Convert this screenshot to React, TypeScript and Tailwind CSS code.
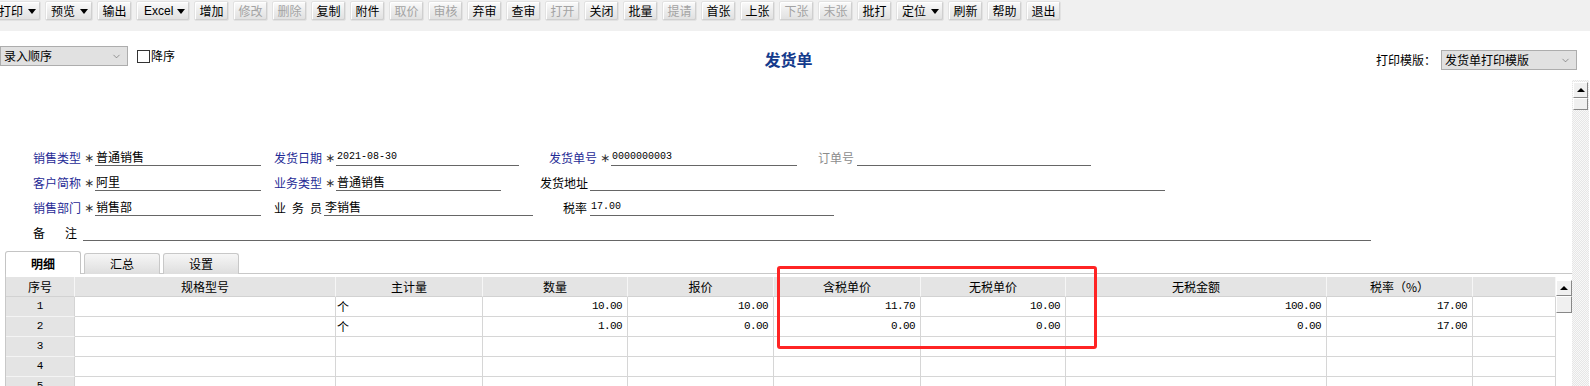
import { ChevronDown } from "lucide-react";

const CJK = "font-['Noto_Sans_CJK_SC','Noto_Sans',sans-serif]";
const MONO = "font-['Liberation_Mono','DejaVu_Sans_Mono',monospace]";

type Btn = { t: string; drop?: boolean; off?: boolean; w: string };

const buttons: Btn[] = [
  { t: "打印", drop: true, w: "w-[48px] -ml-[7px]" },
  { t: "预览", drop: true, w: "w-[48px]" },
  { t: "输出", w: "w-[35px]" },
  { t: "Excel", drop: true, w: "w-[54px]" },
  { t: "增加", w: "w-[35px]" },
  { t: "修改", off: true, w: "w-[35px]" },
  { t: "删除", off: true, w: "w-[35px]" },
  { t: "复制", w: "w-[35px]" },
  { t: "附件", w: "w-[35px]" },
  { t: "取价", off: true, w: "w-[35px]" },
  { t: "审核", off: true, w: "w-[35px]" },
  { t: "弃审", w: "w-[35px]" },
  { t: "查审", w: "w-[35px]" },
  { t: "打开", off: true, w: "w-[35px]" },
  { t: "关闭", w: "w-[35px]" },
  { t: "批量", w: "w-[35px]" },
  { t: "提请", off: true, w: "w-[35px]" },
  { t: "首张", w: "w-[35px]" },
  { t: "上张", w: "w-[35px]" },
  { t: "下张", off: true, w: "w-[35px]" },
  { t: "末张", off: true, w: "w-[35px]" },
  { t: "批打", w: "w-[35px]" },
  { t: "定位", drop: true, w: "w-[48px]" },
  { t: "刷新", w: "w-[35px]" },
  { t: "帮助", w: "w-[35px]" },
  { t: "退出", w: "w-[35px]" },
];

function Caret() {
  return <span className="w-0 h-0 border-l-[4px] border-r-[4px] border-t-[5px] border-l-transparent border-r-transparent border-t-black" />;
}

function Toolbar() {
  return (
    <div className="h-[31px] bg-[#f0f0f0] flex items-start gap-[4px] pt-[1px] overflow-hidden">
      {buttons.map((b) => (
        <div
          key={b.t}
          className={`${b.w} shrink-0 h-[20px] rounded-[2px] border border-[#e2e2e2] bg-gradient-to-b from-[#fbfbfb] via-[#ececec] to-[#e0e0e0] shadow-[inset_-1px_-1px_0_#cfcfcf,inset_1px_1px_0_#ffffff] flex items-center text-[12px] leading-none ${
            b.drop ? "pl-[5px] pr-[2px]" : "justify-center"
          } ${b.off ? "text-[#a3a3a3]" : "text-black"} ${b.t === "Excel" ? "font-['Liberation_Sans',sans-serif] pl-[7px]" : ""}`}
        >
          <span>{b.t}</span>
          {b.drop && (
            <span className="ml-auto mr-[2px] flex items-center">
              <Caret />
            </span>
          )}
        </div>
      ))}
    </div>
  );
}

function Select({ text, w }: { text: string; w: string }) {
  return (
    <div className={`${w} h-[20px] bg-[#e1e1e1] border border-[#adadad] flex items-center pl-[3px] pr-[5px] text-[12px] text-black`}>
      <span>{text}</span>
      <ChevronDown className="ml-auto text-[#666]" size={11} strokeWidth={1.4} />
    </div>
  );
}

function Field({ label, star, value, w, lw, blue, gray, mono, spread }: {
  label: string;
  star?: boolean;
  value?: string;
  w: string;
  lw: string;
  blue?: boolean;
  gray?: boolean;
  mono?: boolean;
  spread?: boolean;
}) {
  return (
    <div className="flex items-end h-[19px]">
      <span
        className={`${lw} shrink-0 text-[12px] leading-[16px] ${blue ? "text-[#1f2b96]" : gray ? "text-[#8c8c8c]" : "text-black"} ${
          spread ? "flex justify-between pr-[2px]" : ""
        }`}
      >
        {spread ? label.split(" ").map((c, i) => <span key={i}>{c}</span>) : label}
      </span>
      {star && (
        <span className="w-[12px] shrink-0 font-['DejaVu_Sans',sans-serif] text-[12px] leading-[16px] text-[#333] pl-[1px]">∗</span>
      )}
      <div className={`${w} shrink-0 h-[19px] border-b border-[#666] flex items-end pl-[1px] pb-[1px]`}>
        {value && (
          <span className={mono ? `${MONO} text-[10px] leading-[14px] text-black` : "text-[12px] leading-[15px] text-black"}>{value}</span>
        )}
      </div>
    </div>
  );
}

function FormArea() {
  return (
    <div className="flex flex-col gap-[6px] pl-[33px] pt-[67px]">
      <div className="flex">
        <Field label="销售类型" star value="普通销售" lw="w-[50px]" w="w-[166px]" blue />
        <div className="ml-[13px]"><Field label="发货日期" star value="2021-08-30" lw="w-[50px]" w="w-[183px]" blue mono /></div>
        <div className="ml-[30px]"><Field label="发货单号" star value="0000000003" lw="w-[50px]" w="w-[186px]" blue mono /></div>
        <div className="ml-[21px]"><Field label="订单号" lw="w-[39px]" w="w-[234px]" gray /></div>
      </div>
      <div className="flex">
        <Field label="客户简称" star value="阿里" lw="w-[50px]" w="w-[166px]" blue />
        <div className="ml-[13px]"><Field label="业务类型" star value="普通销售" lw="w-[50px]" w="w-[165px]" blue /></div>
        <div className="ml-[39px]"><Field label="发货地址" lw="w-[50px]" w="w-[575px]" /></div>
      </div>
      <div className="flex">
        <Field label="销售部门" star value="销售部" lw="w-[50px]" w="w-[166px]" blue />
        <div className="ml-[13px]"><Field label="业 务 员" value="李销售" lw="w-[50px]" w="w-[209px]" spread /></div>
        <div className="ml-[30px]"><Field label="税率" value="17.00" lw="w-[27px]" w="w-[244px]" mono /></div>
      </div>
      <div className="flex">
        <Field label="备 注" lw="w-[50px] pr-[6px]" w="w-[1288px]" spread />
      </div>
    </div>
  );
}

const headers = ["序号", "规格型号", "主计量", "数量", "报价", "含税单价", "无税单价", "无税金额", "税率（%）", ""];

const rows: string[][] = [
  ["1", "", "个", "10.00", "10.00", "11.70", "10.00", "100.00", "17.00", ""],
  ["2", "", "个", "1.00", "0.00", "0.00", "0.00", "0.00", "17.00", ""],
  ["3", "", "", "", "", "", "", "", "", ""],
  ["4", "", "", "", "", "", "", "", "", ""],
  ["5", "", "", "", "", "", "", "", "", ""],
  ["6", "", "", "", "", "", "", "", "", ""],
];

function Grid() {
  return (
    <div className="flex-1 grid grid-cols-[69px_261px_147px_145px_146px_147px_145px_261px_146px_1fr] auto-rows-[20px]">
      {headers.map((h, i) => (
        <div
          key={`h${i}`}
          className="bg-[#e4e4e4] border-r border-b border-r-[#f6f6f6] border-b-[#d2d2d2] flex items-center justify-center text-[12px] text-black"
        >
          {h}
        </div>
      ))}
      {rows.map((r, ri) =>
        r.map((c, ci) => {
          if (ci === 0)
            return (
              <div key={`${ri}-${ci}`} className={`bg-[#e4e4e4] border-r border-b border-r-[#d4d4d4] border-b-[#f4f4f4] flex items-center justify-center ${MONO} text-[11px] text-black`}>
                {c}
              </div>
            );
          if (ci === 2)
            return (
              <div key={`${ri}-${ci}`} className="border-r border-b border-[#d6d6d6] flex items-center pl-[1px] text-[12px] text-black">
                {c}
              </div>
            );
          return (
            <div
              key={`${ri}-${ci}`}
              className={`border-r border-b border-[#d6d6d6] flex items-center justify-end pr-[5px] ${MONO} text-[11px] tracking-[-0.6px] text-black`}
            >
              {c}
            </div>
          );
        }),
      )}
    </div>
  );
}

function UpBtn({ w }: { w: string }) {
  return (
    <div className={`${w} h-[16px] bg-[#f0f0f0] border border-t-white border-l-white border-r-[#888] border-b-[#888] flex items-center justify-center`}>
      <span className="w-0 h-0 border-l-[4px] border-r-[4px] border-b-[4px] border-l-transparent border-r-transparent border-b-black" />
    </div>
  );
}

function TabsPanel() {
  return (
    <div className="mt-[10px] pl-[5px]">
      <div className="flex items-end h-[23px] gap-[3px]">
        <div className="w-[76px] h-[23px] bg-white border border-b-0 border-[#c4c4c4] rounded-t-[3px] flex justify-center pt-[3px] text-[12px] font-bold text-black">
          明细
        </div>
        <div className="w-[76px] h-[21px] bg-gradient-to-b from-[#f6f6f6] to-[#dedede] border border-b-0 border-[#c8c8c8] rounded-t-[3px] flex items-end justify-center pb-[1px] text-[12px] text-black">
          汇总
        </div>
        <div className="w-[76px] h-[21px] bg-gradient-to-b from-[#f6f6f6] to-[#dedede] border border-b-0 border-[#c8c8c8] rounded-t-[3px] flex items-end justify-center pb-[1px] text-[12px] text-black">
          设置
        </div>
      </div>
      <div className="border-t border-l border-[#c8c8c8] pt-[3px] flex h-[120px] -mt-px">
        <Grid />
        <div className="w-[16px] shrink-0 flex flex-col pt-[3px]">
          <UpBtn w="w-[16px]" />
          <div className="h-[17px] w-[16px] bg-[#f0f0f0] border border-t-white border-l-white border-r-[#888] border-b-[#888]" />
        </div>
      </div>
    </div>
  );
}

export default function App() {
  return (
    <div className={`relative w-[1590px] h-[386px] overflow-hidden bg-white ${CJK}`}>
      <Toolbar />
      <div className="h-[49px] flex items-start">
        <div className="flex-1 flex items-center pt-[15px]">
          <Select text="录入顺序" w="w-[128px]" />
          <span className="ml-[9px] w-[13px] h-[13px] border border-[#333] bg-white" />
          <span className="ml-[1px] text-[12px] text-black">降序</span>
        </div>
        <div className="pt-[18px] text-[16px] leading-[20px] font-bold text-[#143b8c]">发货单</div>
        <div className="flex-1 flex items-center justify-end pt-[19px] pr-[13px]">
          <span className="text-[12px] text-black mr-[5px]">打印模版：</span>
          <Select text="发货单打印模版" w="w-[136px]" />
        </div>
      </div>
      <div className="flex h-[306px]">
        <div className="flex-1 overflow-hidden">
          <FormArea />
          <TabsPanel />
        </div>
        <div className="w-[17px] mr-[1px] shrink-0 bg-[repeating-conic-gradient(#e6e6e6_0%_25%,#f8f8f8_0%_50%)] bg-[length:2px_2px] pt-[2px] flex flex-col items-center">
          <UpBtn w="w-[15px]" />
          <div className="w-[15px] h-[12px] bg-[#f0f0f0] border border-t-white border-l-white border-r-[#888] border-b-[#888]" />
        </div>
      </div>
      <div className="absolute left-[777px] top-[266px] w-[320px] h-[83px] border-[3px] border-[#ff2424] rounded-[3px]" />
    </div>
  );
}
